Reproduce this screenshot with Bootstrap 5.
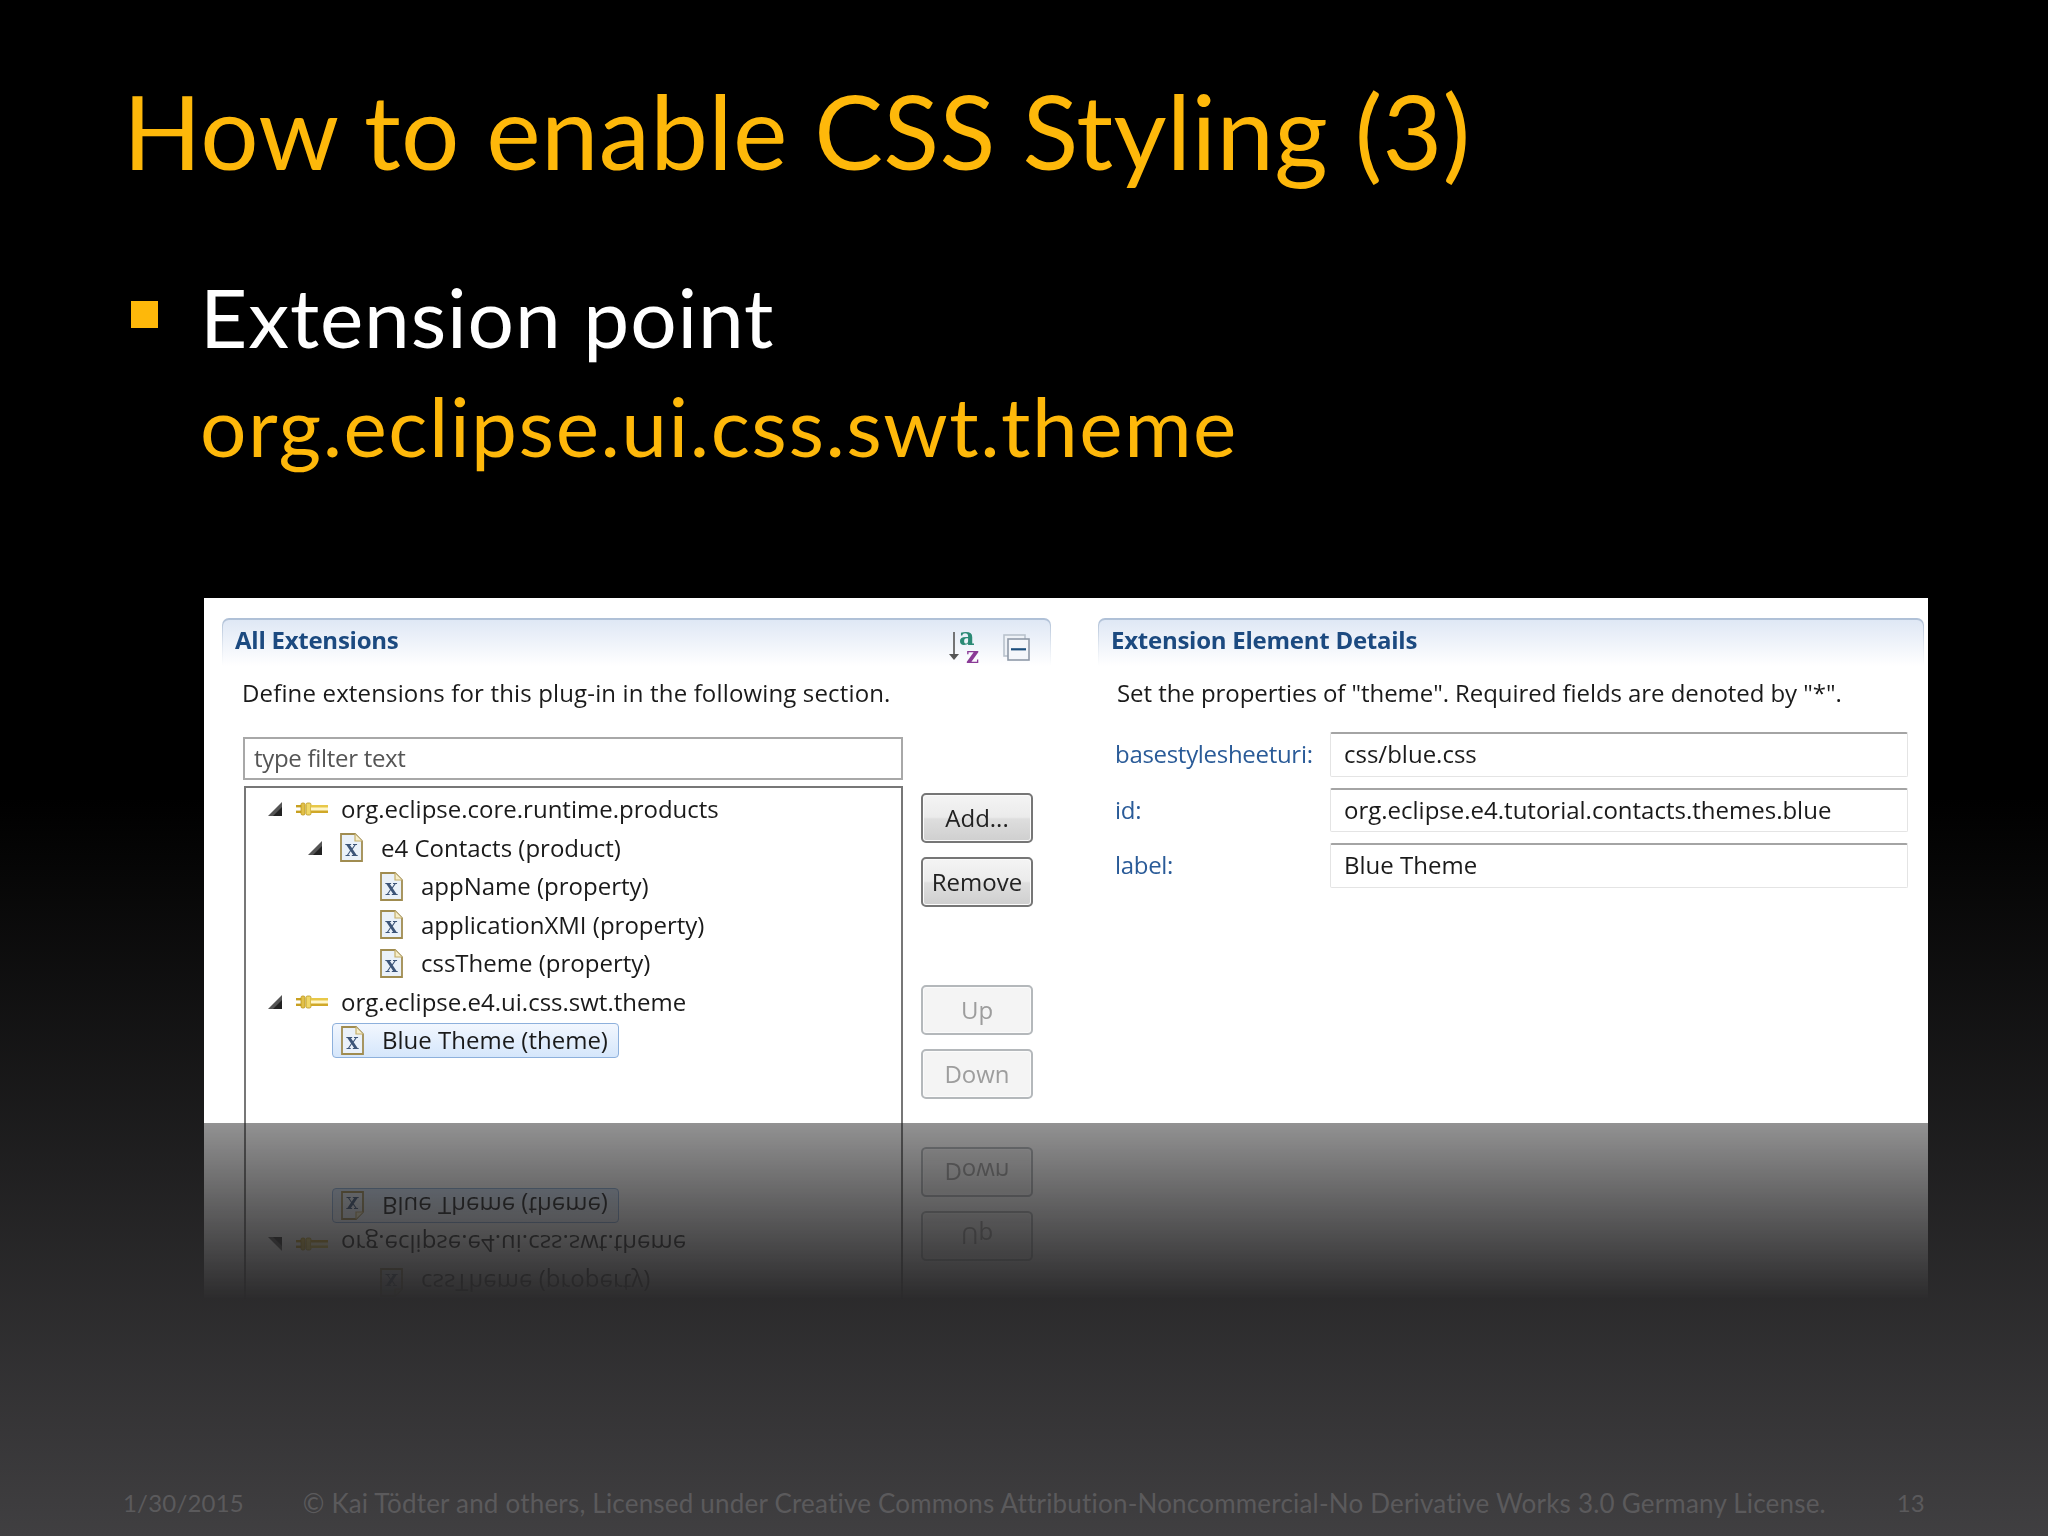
<!DOCTYPE html>
<html lang="en">
<head>
<meta charset="utf-8">
<title>How to enable CSS Styling (3)</title>
<link href="https://cdn.jsdelivr.net/npm/bootstrap@5.3.0/dist/css/bootstrap.min.css" rel="stylesheet">
<style>
html,body{margin:0;background:#000}
.slide{width:2048px;height:1536px;overflow:hidden;padding:70px 0 0 127px;font-family:Lato,"Liberation Sans",sans-serif;background:linear-gradient(180deg,#000 0,#000 52%,#403f41 100%)}
.slide-title{font:400 103px/120px Lato,sans-serif;color:#feb80a;margin:0 0 72px -4px;letter-spacing:.3px}
.bullet-row{color:#fff;font-size:82px;line-height:109px;margin-left:4px;gap:42px;letter-spacing:.85px}
.bullet-mark{width:27px;height:27px;background:#feb80a;margin-top:39px;flex:none}
.accent{color:#feb80a;letter-spacing:1.53px}
.shot{margin:118px 0 360px 77px;width:1724px;height:525px;background:#fff;overflow:hidden;padding:20px 4px 0 18px;gap:47px;font-family:"Open Sans",sans-serif;font-size:24px;letter-spacing:0;color:#1a1a1a;-webkit-box-reflect:below 0 linear-gradient(transparent 66.3%,rgba(255,255,255,.52) 100%)}
.sec-left{width:829px}
.sec-right{width:826px}
.sec-edge{background:linear-gradient(180deg,#aebfd6 0,#e4eaf2 60%,#fff 100%);padding:2px 1px 0;border-radius:7px 7px 0 0;height:48px}
.sec-head{height:46px;background:linear-gradient(180deg,#dfe8f5 0,#fff 100%);border-radius:6px 6px 0 0;padding:0 19px 0 12px;font-weight:700;color:#1c4a80;line-height:40px;letter-spacing:-.25px}
.head-tools{gap:20px;margin-top:6px}
.min-icon{margin-top:8px}
.intro{line-height:32px;margin:11px 0 0 20px;white-space:nowrap;letter-spacing:.15px}
.intro-r{margin-left:19px;letter-spacing:-.06px}
.filter-box{width:660px;height:43px;margin:28px 0 0 21px;border:2px solid #a8a8a8;padding:0 9px;line-height:38px;color:#555;letter-spacing:-.3px}
.tree-row{margin:6px 0 0 22px;gap:18px}
.tree-box{width:659px;height:360px;border:2px solid #777;border-bottom:0;padding-top:2px;flex:none}
.node{height:38.5px;line-height:38px;padding-left:22px;white-space:nowrap}
.lvl1{padding-left:62px}
.lvl2{padding-left:102px}
.twist{width:32px;flex:none;display:block}
.conn{width:45px;margin-left:-4px;flex:none}
.doc{width:41px;flex:none}
.picked{height:35px;margin-left:-8px;padding:0 6px 0 8px;border:1px solid #8db0dc;border-radius:4px;background:linear-gradient(180deg,#f2f7fe,#d5e6fb);width:287px}
.side-btns{width:112px;padding-top:7px;flex:none}
.act{width:112px;height:50px;padding:0;margin-bottom:14px;border:2px solid #767676;border-radius:5px;background:linear-gradient(180deg,#f4f4f4 0,#ebebeb 48%,#dedede 52%,#cfcfcf 100%);box-shadow:inset 0 0 0 1px #fbfbfb;color:#222;font-size:24px;letter-spacing:0;font-family:inherit;line-height:44px;opacity:1}
.act-off.act:disabled{border-color:#b4b8bb;background:#f4f4f4;color:#9d9d9d;opacity:1}
.gap-up{margin-top:64px}
.fields{margin:23px 0 0 17px;gap:11px}
.field-row{height:44.5px}
.field-label{width:215px;flex:none;color:#2a5b98;line-height:44px;white-space:nowrap;letter-spacing:-.3px}
.field-val{width:578px;height:44.5px;border:1px solid #e4e4e4;border-top:2px solid #a4a4a4;border-radius:2px;padding:0 13px;line-height:40px;color:#1a1a1a;font-size:24px;background:#fff}
.slide-foot{margin-left:-4px;width:1802px;color:#5b5a5c;font-size:24px;line-height:40px;letter-spacing:.2px}
.foot-main{font-size:26px;margin-right:12px}
</style>
</head>
<body>
<svg width="0" height="0" class="position-absolute">
  <defs>
    <symbol id="i-tri" viewBox="0 0 14 14"><polygon points="0,14 14,0 14,14" fill="#555"/><polygon points="5,14 14,5 14,14" fill="#222"/></symbol>
    <symbol id="i-conn" viewBox="0 0 33 14">
      <rect x="0" y="3" width="5" height="2.4" fill="#c8a020"/><rect x="0" y="8.6" width="5" height="2.4" fill="#c8a020"/>
      <rect x="5" y="1" width="4" height="12" rx="1.5" fill="#e2c048" stroke="#b8941a" stroke-width=".8"/>
      <rect x="10" y="1" width="5" height="12" rx="1.5" fill="#f0d868" stroke="#b8941a" stroke-width=".8"/>
      <rect x="15" y="3" width="17" height="3" fill="#e8c848"/><rect x="15" y="8" width="17" height="3" fill="#d0a828"/>
      <rect x="15" y="5.5" width="17" height="3" fill="#fff6c8"/>
    </symbol>
    <symbol id="i-doc" viewBox="0 0 23 29">
      <path d="M1 1H15L22 8V28H1Z" fill="#eaf1f9" stroke="#a08c50" stroke-width="1.8"/>
      <path d="M15 1V8H22" fill="#f6eeca" stroke="#c4ae6a" stroke-width="1.2"/>
      <text x="11.5" y="22.5" text-anchor="middle" font-family="DejaVu Serif,serif" font-weight="700" font-size="16" letter-spacing="0" fill="#3d5578">X</text>
    </symbol>
    <symbol id="i-az" viewBox="0 0 34 38">
      <path d="M5 6V29" stroke="#666" stroke-width="1.8"/><polygon points="0,28 10,28 5,34" fill="#555"/>
      <text x="10" y="19" font-family="DejaVu Serif,serif" font-weight="700" font-size="24" letter-spacing="0" fill="#2b8a75">a</text>
      <text x="17" y="37" font-family="DejaVu Serif,serif" font-weight="700" font-size="23" letter-spacing="0" fill="#8a3a96">z</text>
    </symbol>
    <symbol id="i-min" viewBox="0 0 28 28">
      <rect x="1" y="1" width="21" height="21" fill="#eef2f7" stroke="#b9c2cc" stroke-width="1.6"/>
      <rect x="5" y="5" width="21" height="21" fill="#f4f7fb" stroke="#8f99a8" stroke-width="1.6"/>
      <rect x="8" y="14.2" width="15" height="2.2" fill="#1d4f7d"/>
    </symbol>
  </defs>
</svg>
<div class="slide">
  <h1 class="slide-title">How to enable CSS Styling (3)</h1>
  <div class="bullet-row d-flex">
    <span class="bullet-mark"></span>
    <div>Extension point<br><span class="accent">org.eclipse.ui.css.swt.theme</span></div>
  </div>
  <div class="shot d-flex">
    <div class="sec-left">
      <div class="sec-edge"><div class="sec-head d-flex justify-content-between">
        <span>All Extensions</span>
        <span class="head-tools d-flex"><svg width="34" height="38"><use href="#i-az"/></svg><svg class="min-icon" width="28" height="28"><use href="#i-min"/></svg></span>
      </div></div>
      <div class="intro">Define extensions for this plug-in in the following section.</div>
      <div class="filter-box">type filter text</div>
      <div class="tree-row d-flex">
        <div class="tree-box">
          <div class="node d-flex align-items-center"><span class="twist"><svg class="d-block" width="14" height="14"><use href="#i-tri"/></svg></span><span class="conn"><svg class="d-block" width="33" height="14"><use href="#i-conn"/></svg></span>org.eclipse.core.runtime.products</div>
          <div class="node lvl1 d-flex align-items-center"><span class="twist"><svg class="d-block" width="14" height="14"><use href="#i-tri"/></svg></span><span class="doc"><svg class="d-block" width="23" height="29"><use href="#i-doc"/></svg></span>e4 Contacts (product)</div>
          <div class="node lvl2 d-flex align-items-center"><span class="twist"></span><span class="doc"><svg class="d-block" width="23" height="29"><use href="#i-doc"/></svg></span>appName (property)</div>
          <div class="node lvl2 d-flex align-items-center"><span class="twist"></span><span class="doc"><svg class="d-block" width="23" height="29"><use href="#i-doc"/></svg></span>applicationXMI (property)</div>
          <div class="node lvl2 d-flex align-items-center"><span class="twist"></span><span class="doc"><svg class="d-block" width="23" height="29"><use href="#i-doc"/></svg></span>cssTheme (property)</div>
          <div class="node d-flex align-items-center"><span class="twist"><svg class="d-block" width="14" height="14"><use href="#i-tri"/></svg></span><span class="conn"><svg class="d-block" width="33" height="14"><use href="#i-conn"/></svg></span>org.eclipse.e4.ui.css.swt.theme</div>
          <div class="node lvl1 d-flex align-items-center"><span class="twist"></span><span class="picked d-flex align-items-center"><span class="doc"><svg class="d-block" width="23" height="29"><use href="#i-doc"/></svg></span>Blue Theme (theme)</span></div>
        </div>
        <div class="side-btns d-flex flex-column">
          <button type="button" class="btn act">Add...</button>
          <button type="button" class="btn act">Remove</button>
          <button type="button" class="btn act act-off gap-up" disabled>Up</button>
          <button type="button" class="btn act act-off" disabled>Down</button>
        </div>
      </div>
    </div>
    <div class="sec-right">
      <div class="sec-edge"><div class="sec-head">Extension Element Details</div></div>
      <div class="intro intro-r">Set the properties of "theme". Required fields are denoted by "*".</div>
      <div class="fields d-flex flex-column">
        <div class="field-row d-flex"><span class="field-label">basestylesheeturi:</span><div class="field-val">css/blue.css</div></div>
        <div class="field-row d-flex"><span class="field-label">id:</span><div class="field-val">org.eclipse.e4.tutorial.contacts.themes.blue</div></div>
        <div class="field-row d-flex"><span class="field-label">label:</span><div class="field-val">Blue Theme</div></div>
      </div>
    </div>
  </div>
  <div class="slide-foot d-flex justify-content-between">
    <span>1/30/2015</span>
    <span class="foot-main">© Kai Tödter and others, Licensed under Creative Commons Attribution-Noncommercial-No Derivative Works 3.0 Germany License.</span>
    <span>13</span>
  </div>
</div>
<script src="https://cdn.jsdelivr.net/npm/bootstrap@5.3.0/dist/js/bootstrap.bundle.min.js"></script>
</body>
</html>
